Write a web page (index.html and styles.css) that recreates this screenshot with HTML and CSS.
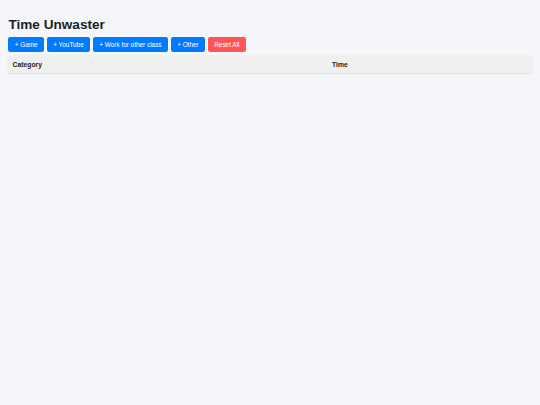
FILE: index.html
```html
<!DOCTYPE html>
<html lang="en">
<head>
<meta charset="utf-8">
<title>Time Unwaster</title>
<link rel="stylesheet" href="styles.css">
</head>
<body>
<main class="app">
  <h1 class="title">Time Unwaster</h1>
  <div class="actions">
    <button class="btn btn-add">+ Game</button>
    <button class="btn btn-add">+ YouTube</button>
    <button class="btn btn-add">+ Work for other class</button>
    <button class="btn btn-add">+ Other</button>
    <button class="btn btn-reset">Reset All</button>
  </div>
  <table class="log">
    <thead>
      <tr><th>Category</th><th>Time</th></tr>
    </thead>
    <tbody></tbody>
  </table>
</main>
</body>
</html>
```

FILE: styles.css
```css
html, body {
  margin: 0;
  padding: 0;
  background: #f4f6fa;
}
body {
  font-family: "Liberation Sans", Arial, Helvetica, sans-serif;
  color: #222;
}
.app {
  padding: 8.4px;
}
.title {
  margin: 9px 0 4px;
  font-size: 13.6px;
  line-height: 16px;
  font-weight: bold;
  color: #1e1e1e;
}
.actions {
  display: flex;
  gap: 3px;
  margin-bottom: 4px;
}
.btn {
  font-family: inherit;
  font-size: 6.4px;
  line-height: 7px;
  padding: 4px 6.3px;
  height: 15px;
  border: none;
  border-radius: 2.2px;
  color: #fff;
  cursor: pointer;
}
.btn-add {
  background: #007bff;
}
.btn-reset {
  background: #ff5555;
}
.log {
  width: 100%;
  border-collapse: collapse;
  background: #fff;
  border-radius: 2.5px;
  overflow: hidden;
  box-shadow: 0 0.8px 2px rgba(0, 0, 0, 0.1);
}
.log th {
  background: #efefef;
  text-align: left;
  font-size: 6.8px;
  font-weight: bold;
  padding: 4.2px;
  line-height: 8px;
  color: #222;
}
```
